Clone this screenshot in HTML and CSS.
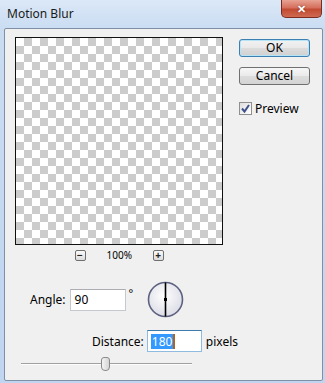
FILE: index.html
```html
<!DOCTYPE html>
<html>
<head>
<meta charset="utf-8">
<link rel="stylesheet" href="styles.css">
</head>
<body>
<div class="window">
  <div class="titlebar">
    <span class="title">Motion Blur</span>
    <span class="close">✕</span>
  </div>
  <div class="client">
    <div class="top">
      <div class="preview-col">
        <div class="preview"></div>
        <div class="zoomrow">
          <span class="zbtn">−</span>
          <span class="zpct">100%</span>
          <span class="zbtn">+</span>
        </div>
      </div>
      <div class="buttons">
        <div class="btn btn-default">OK</div>
        <div class="btn">Cancel</div>
        <label class="check"><span class="box"><svg width="11" height="11" viewBox="0 0 11 11"><path d="M2 5.5 L4.5 8.5 L9 2" fill="none" stroke="#3f528c" stroke-width="2"/></svg></span>Preview</label>
      </div>
    </div>
    <div class="anglerow">
      <span class="lbl">Angle:</span>
      <span class="input">90</span>
      <span class="deg">°</span>
      <svg class="dial" width="37" height="37" viewBox="0 0 37 37">
        <defs>
          <radialGradient id="g" cx="45%" cy="40%" r="60%">
            <stop offset="0" stop-color="#ffffff"/>
            <stop offset="1" stop-color="#dcdde6"/>
          </radialGradient>
        </defs>
        <circle cx="18.5" cy="18.5" r="17" fill="url(#g)" stroke="#5d6180" stroke-width="1.6"/>
        <line x1="18.5" y1="1.5" x2="18.5" y2="35.5" stroke="#000" stroke-width="1.6"/>
        <rect x="17" y="17" width="3" height="3" fill="#000"/>
      </svg>
    </div>
    <div class="distrow">
      <span class="lbl">Distance:</span>
      <span class="input focused"><span class="sel">180</span><span class="caret"></span></span>
      <span class="unit">pixels</span>
    </div>
    <div class="slider">
      <div class="track"></div>
      <div class="thumb"></div>
    </div>
  </div>
</div>
</body>
</html>
```

FILE: styles.css
```css
html, body {
  margin: 0;
  padding: 0;
}
body {
  width: 325px;
  height: 383px;
  overflow: hidden;
  font-family: "Noto Sans", "Open Sans", sans-serif;
  font-size: 12px;
  color: #000;
}
.window {
  width: 325px;
  height: 383px;
  box-sizing: border-box;
  padding: 0 2px 2px 4px;
  background: linear-gradient(180deg, #dbe8f7 0%, #c9dcf2 30px, #c0d5ef 100%);
  display: flex;
  flex-direction: column;
}
.titlebar {
  height: 28px;
  display: flex;
  justify-content: space-between;
  align-items: flex-start;
  flex: none;
}
.title {
  margin-top: 5px;
  margin-left: 3px;
  font-size: 12px;
  color: #1a1a1a;
}
.close {
  width: 41px;
  height: 18px;
  box-sizing: border-box;
  margin-right: 1px;
  border: 1px solid #7d2a20;
  border-top: none;
  border-radius: 0 0 5px 5px;
  background: linear-gradient(180deg, #e8a293 0%, #d5705d 45%, #c24a33 55%, #cf6a52 100%);
  color: #fff;
  font-size: 11px;
  font-weight: bold;
  display: flex;
  align-items: center;
  justify-content: center;
  text-shadow: 0 0 2px #7d2a20;
}
.client {
  flex: 1;
  background: #f0f0f0;
  border: 1px solid #7f8fa5;
  border-radius: 2px;
  display: flex;
  flex-direction: column;
}
.top {
  display: flex;
  padding: 8px 0 0 10px;
}
.preview-col {
  display: flex;
  flex-direction: column;
  width: 208px;
}
.preview {
  width: 206px;
  height: 206px;
  border: 1px solid #111;
  background-color: #fff;
  background-image: repeating-conic-gradient(#cccccc 0 25%, #ffffff 0 50%);
  background-size: 16px 16px;
}
.zoomrow {
  display: flex;
  justify-content: center;
  align-items: center;
  gap: 21px;
  margin-top: 5px;
  height: 11px;
}
.zbtn {
  width: 11px;
  height: 11px;
  box-sizing: border-box;
  border: 1px solid #6f6f6f;
  border-radius: 2px;
  background: linear-gradient(#fafafa, #dcdcdc);
  font-size: 10px;
  line-height: 9px;
  text-align: center;
  font-weight: bold;
  color: #222;
}
.zpct {
  font-size: 10px;
  line-height: 11px;
  width: 25px;
  text-align: center;
}
.buttons {
  display: flex;
  flex-direction: column;
  margin-left: 16px;
  margin-top: 2px;
}
.btn {
  width: 71px;
  height: 18px;
  box-sizing: border-box;
  border: 1px solid #707070;
  border-radius: 3px;
  background: linear-gradient(180deg, #f6f6f6 0%, #ebebeb 48%, #dddddd 52%, #d3d3d3 100%);
  text-align: center;
  line-height: 16px;
  font-size: 12px;
  margin-bottom: 10px;
}
.btn-default {
  border-color: #3c7fb1;
  box-shadow: inset 0 0 0 1px #b6e4f7;
  background: linear-gradient(180deg, #f2f2f2 0%, #e9e9e9 48%, #dcdcdc 52%, #d0d0d0 100%);
}
.check {
  display: flex;
  align-items: center;
  margin-top: 5px;
  font-size: 12px;
  gap: 3px;
}
.box {
  width: 13px;
  height: 13px;
  box-sizing: border-box;
  border: 1px solid #8f8f8f;
  background: linear-gradient(135deg, #dedede, #ffffff);
  display: flex;
  align-items: center;
  justify-content: center;
}
.anglerow {
  display: flex;
  align-items: center;
  margin-top: 20px;
  padding-left: 25px;
  height: 37px;
}
.lbl {
  margin-right: 4px;
}
.input {
  width: 56px;
  height: 22px;
  box-sizing: border-box;
  border: 1px solid #c4c8cf;
  border-top-color: #abadb3;
  background: #fff;
  padding-left: 4px;
  line-height: 20px;
  display: flex;
  align-items: center;
}
.deg {
  align-self: flex-start;
  margin-top: 4px;
  margin-left: 3px;
  font-size: 11px;
}
.dial {
  margin-left: 14px;
}
.distrow {
  display: flex;
  align-items: center;
  margin-top: 12px;
  padding-left: 87px;
  height: 22px;
}
.distrow .lbl {
  margin-right: 3px;
}
.focused {
  width: 55px;
  border-color: #8fbbe0;
  border-top-color: #3d7bad;
  padding-left: 3px;
}
.sel {
  background: #3399ff;
  color: #fff;
  line-height: 15px;
  padding: 0 1px;
}
.caret {
  width: 2px;
  height: 15px;
  background: #b3621d;
}
.unit {
  margin-left: 4px;
}
.slider {
  position: relative;
  margin-top: 5px;
  margin-left: 16px;
  width: 171px;
  height: 16px;
}
.track {
  position: absolute;
  left: 0;
  right: 0;
  top: 6px;
  height: 1px;
  background: #a0a0a0;
  border-bottom: 1px solid #fdfdfd;
}
.thumb {
  position: absolute;
  left: 80px;
  top: 0;
  width: 9px;
  height: 14px;
  box-sizing: border-box;
  border: 1px solid #8a8a8a;
  border-radius: 3px 3px 4px 4px;
  background: linear-gradient(90deg, #f4f4f4, #d6d6d6);
}
```
